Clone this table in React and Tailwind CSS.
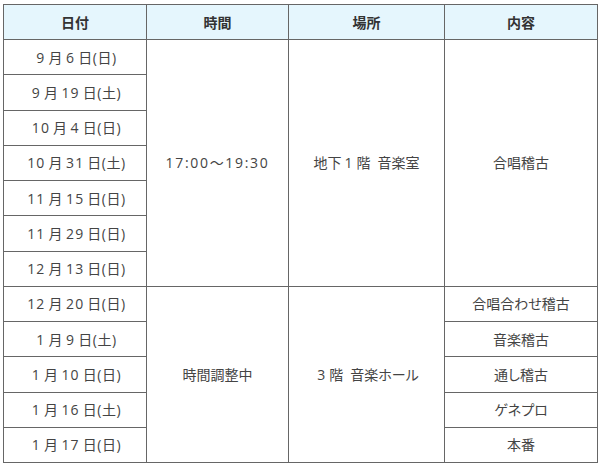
function Spaced({ text }) {
  // 数字のまわりだけ少し広げる
  const parts = text.split(/(\d+)/);
  return (
    <>
      {parts.map((p, i) =>
        /^\d+$/.test(p) ? (
          <span key={i} className="mx-[3px] tracking-[0.08em]">
            {p}
          </span>
        ) : (
          <span key={i}>{p}</span>
        )
      )}
    </>
  );
}

export default function App() {
  const dates = [
    "9月6日(日)",
    "9月19日(土)",
    "10月4日(日)",
    "10月31日(土)",
    "11月15日(日)",
    "11月29日(日)",
    "12月13日(日)",
    "12月20日(日)",
    "1月9日(土)",
    "1月10日(日)",
    "1月16日(土)",
    "1月17日(日)",
  ];
  const later = ["合唱合わせ稽古", "音楽稽古", "通し稽古", "ゲネプロ", "本番"];

  const td = "border border-[#666] text-center align-middle";

  return (
    <div
      className="bg-white w-[600px] h-[466px] pl-[3px] pt-[4px] text-[14px] text-[#444] [font-feature-settings:'palt']"
      style={{ fontFamily: '"Open Sans", "Noto Sans CJK JP", sans-serif' }}
    >
      <table className="border-collapse w-[594px] table-fixed">
        <colgroup>
          <col className="w-[143px]" />
          <col className="w-[142px]" />
          <col className="w-[156px]" />
          <col className="w-[153px]" />
        </colgroup>
        <thead>
          <tr className="h-[35px] bg-[#e5f6fd] text-[#333]">
            <th className={`${td} font-bold`}>日付</th>
            <th className={`${td} font-bold`}>時間</th>
            <th className={`${td} font-bold`}>場所</th>
            <th className={`${td} font-bold`}>内容</th>
          </tr>
        </thead>
        <tbody>
          {dates.map((d, i) => (
            <tr key={d} className="h-[35.25px]">
              <td className={`${td} tracking-[0.04em]`}>
                <Spaced text={d} />
              </td>
              {i === 0 && (
                <>
                  <td className={`${td} tracking-[0.12em]`} rowSpan={7}>
                    17:00〜19:30
                  </td>
                  <td className={td} rowSpan={7}>
                    <Spaced text={"地下1階\u2002音楽室"} />
                  </td>
                  <td className={td} rowSpan={7}>合唱稽古</td>
                </>
              )}
              {i === 7 && (
                <>
                  <td className={td} rowSpan={5}>時間調整中</td>
                  <td className={td} rowSpan={5}>
                    <Spaced text={"3階\u2002音楽ホール"} />
                  </td>
                </>
              )}
              {i >= 7 && <td className={td}>{later[i - 7]}</td>}
            </tr>
          ))}
        </tbody>
      </table>
    </div>
  );
}
